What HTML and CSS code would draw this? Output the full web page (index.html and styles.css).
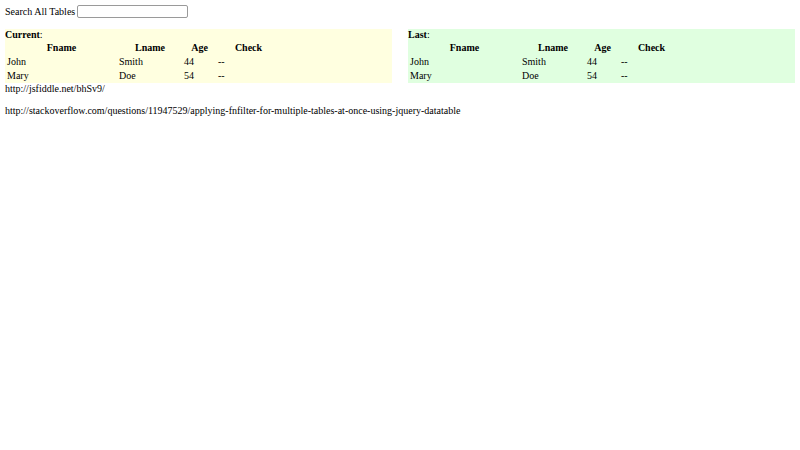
FILE: index.html
```html
<!DOCTYPE html>
<html>
<head>
<meta charset="utf-8">
<link rel="stylesheet" href="styles.css">
</head>
<body>
<div class="search">
  <span>Search All Tables</span>
  <input type="text" class="search-input">
</div>
<div class="tables">
  <div class="panel current">
    <div class="caption"><b>Current</b>:</div>
    <table class="grid">
      <thead>
        <tr><th class="c1">Fname</th><th class="c2">Lname</th><th class="c3">Age</th><th class="c4">Check</th></tr>
      </thead>
      <tbody>
        <tr><td>John</td><td>Smith</td><td>44</td><td>--</td></tr>
        <tr><td>Mary</td><td>Doe</td><td>54</td><td>--</td></tr>
      </tbody>
    </table>
  </div>
  <div class="panel last">
    <div class="caption"><b>Last</b>:</div>
    <table class="grid">
      <thead>
        <tr><th class="c1">Fname</th><th class="c2">Lname</th><th class="c3">Age</th><th class="c4">Check</th></tr>
      </thead>
      <tbody>
        <tr><td>John</td><td>Smith</td><td>44</td><td>--</td></tr>
        <tr><td>Mary</td><td>Doe</td><td>54</td><td>--</td></tr>
      </tbody>
    </table>
  </div>
</div>
<div class="links">
  <div class="line">http://jsfiddle.net/bhSv9/</div>
  <div class="line blank"></div>
  <div class="line">http://stackoverflow.com/questions/11947529/applying-fnfilter-for-multiple-tables-at-once-using-jquery-datatable</div>
</div>
</body>
</html>
```

FILE: styles.css
```css
html, body {
  background: #ffffff;
}
body {
  margin: 5px;
  font-family: "Liberation Serif", "Times New Roman", serif;
  font-size: 10px;
  color: #000;
}
.search {
  display: flex;
  align-items: center;
  gap: 2px;
  height: 13px;
  margin-bottom: 11px;
}
.search-input {
  box-sizing: border-box;
  width: 111px;
  height: 13px;
  margin: 0;
  padding: 0 2px;
  border: 1px solid #9a9a9a;
  border-radius: 2px;
  background: #fff;
  font-size: 8px;
}
.tables {
  display: flex;
  justify-content: space-between;
}
.panel {
  width: 387px;
}
.current {
  background: #ffffe0;
}
.last {
  background: #e0ffe0;
}
.caption {
  line-height: 11px;
  height: 10.5px;
}
.grid {
  border-collapse: separate;
  border-spacing: 1px;
  font-size: 10px;
}
.grid th,
.grid td {
  padding: 1px;
  line-height: 11px;
  text-align: left;
  font-weight: normal;
}
.grid th {
  text-align: center;
  font-weight: bold;
}
.c1 { width: 109px; }
.c2 { width: 62px; }
.c3 { width: 31px; }
.c4 { width: 61px; }
.line {
  line-height: 11px;
  height: 11px;
}
.blank {
  height: 11.5px;
}
```
